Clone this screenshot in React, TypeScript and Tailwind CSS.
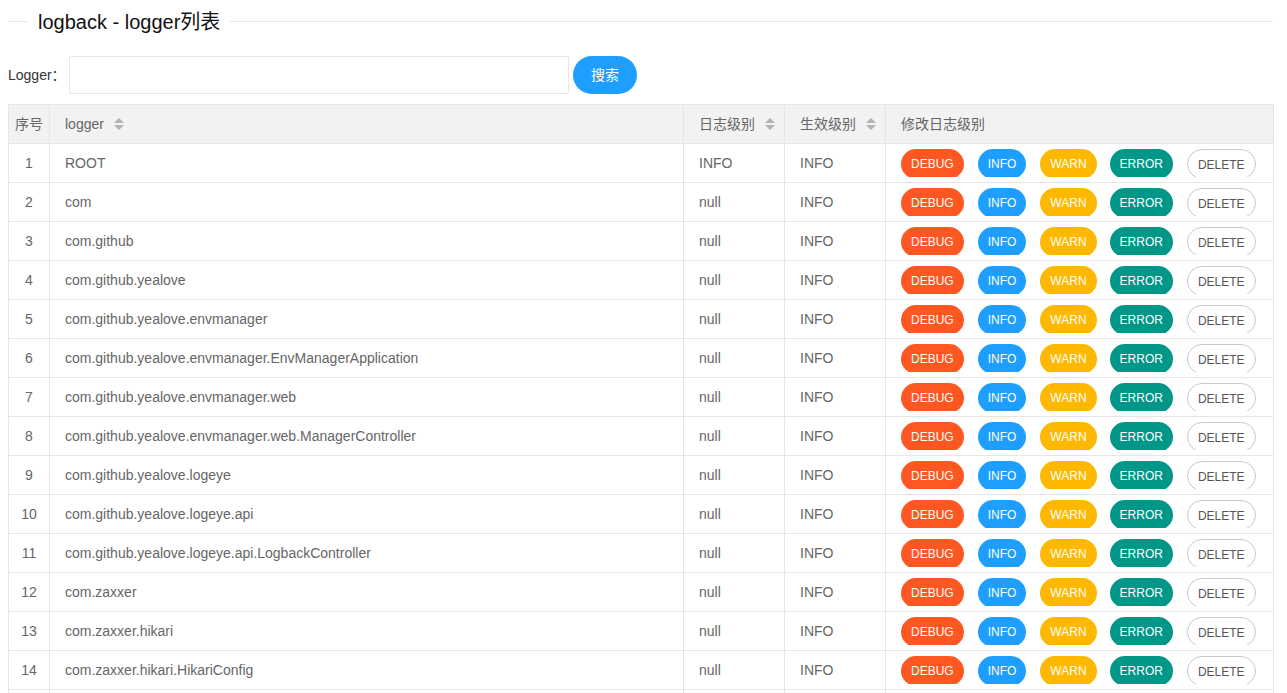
import React from 'react';

const LOGGERS: { name: string; level: string; effective: string }[] = [
  { name: 'ROOT', level: 'INFO', effective: 'INFO' },
  { name: 'com', level: 'null', effective: 'INFO' },
  { name: 'com.github', level: 'null', effective: 'INFO' },
  { name: 'com.github.yealove', level: 'null', effective: 'INFO' },
  { name: 'com.github.yealove.envmanager', level: 'null', effective: 'INFO' },
  { name: 'com.github.yealove.envmanager.EnvManagerApplication', level: 'null', effective: 'INFO' },
  { name: 'com.github.yealove.envmanager.web', level: 'null', effective: 'INFO' },
  { name: 'com.github.yealove.envmanager.web.ManagerController', level: 'null', effective: 'INFO' },
  { name: 'com.github.yealove.logeye', level: 'null', effective: 'INFO' },
  { name: 'com.github.yealove.logeye.api', level: 'null', effective: 'INFO' },
  { name: 'com.github.yealove.logeye.api.LogbackController', level: 'null', effective: 'INFO' },
  { name: 'com.zaxxer', level: 'null', effective: 'INFO' },
  { name: 'com.zaxxer.hikari', level: 'null', effective: 'INFO' },
  { name: 'com.zaxxer.hikari.HikariConfig', level: 'null', effective: 'INFO' },
  { name: 'com.zaxxer.hikari.HikariDataSource', level: 'null', effective: 'INFO' },
];

const LEVEL_BUTTONS = [
  { label: 'DEBUG', cls: 'bg-[#FF5722] text-white leading-[28px]' },
  { label: 'INFO', cls: 'bg-[#1E9FFF] text-white leading-[28px]' },
  { label: 'WARN', cls: 'bg-[#FFB800] text-white leading-[28px]' },
  { label: 'ERROR', cls: 'bg-[#009688] text-white leading-[28px] -ml-px' },
  { label: 'DELETE', cls: 'bg-white text-[#555] border border-[#C9C9C9] leading-[30px]' },
];

const SortIcon = () => (
  <svg width="10" height="12" viewBox="0 0 10 12" className="ml-[10px] inline-block">
    <path d="M5 0 L10 5 L0 5 Z" fill="#b2b2b2" />
    <path d="M0 7 L10 7 L5 12 Z" fill="#b2b2b2" />
  </svg>
);

const Cell = ({ children, center }: { children: React.ReactNode; center?: boolean }) => (
  <div
    className={`h-[28px] leading-[28px] overflow-hidden whitespace-nowrap ${
      center ? 'text-center' : 'px-[15px]'
    }`}
  >
    {children}
  </div>
);

export default function App() {
  return (
    <div className="h-[693px] overflow-hidden bg-white font-['Liberation_Sans','Noto_Sans_CJK_SC',sans-serif] text-[14px] text-[#333]">
      <div className="pl-2 w-[1273px]">
        {/* Title */}
        <div className="flex items-center pt-[8px] h-[35px]">
          <div className="w-[20px] h-px bg-[#e6e6e6]" />
          <span className="px-[10px] text-[20px] leading-[28px] text-[#111]">logback - logger列表</span>
          <div className="flex-1 h-px bg-[#e6e6e6]" />
        </div>

        {/* Search */}
        <div className="flex items-center mt-[21px] h-[38px]">
          <label className="w-[61px] whitespace-nowrap text-[#333]">Logger：</label>
          <input className="w-[500px] h-[38px] border border-[#e6e6e6] rounded-[2px] px-[10px] outline-none" />
          <button className="ml-[4px] h-[38px] px-[18px] rounded-full bg-[#1E9FFF] text-white text-[14px]">搜索</button>
        </div>

        {/* Table */}
        <table className="mt-[10px] w-[1265px] table-fixed border-collapse text-[#666]">
          <colgroup>
            <col className="w-[41px]" />
            <col className="w-[634px]" />
            <col className="w-[101px]" />
            <col className="w-[101px]" />
            <col className="w-[388px]" />
          </colgroup>
          <thead>
            <tr className="bg-[#f2f2f2]">
              <th className="border border-[#e6e6e6] py-[5px] font-normal text-left">
                <Cell center>序号</Cell>
              </th>
              <th className="border border-[#e6e6e6] py-[5px] font-normal text-left">
                <Cell>
                  <span className="inline-flex items-center">logger<SortIcon /></span>
                </Cell>
              </th>
              <th className="border border-[#e6e6e6] py-[5px] font-normal text-left">
                <Cell>
                  <span className="inline-flex items-center">日志级别<SortIcon /></span>
                </Cell>
              </th>
              <th className="border border-[#e6e6e6] py-[5px] font-normal text-left">
                <Cell>
                  <span className="inline-flex items-center">生效级别<SortIcon /></span>
                </Cell>
              </th>
              <th className="border border-[#e6e6e6] py-[5px] font-normal text-left">
                <Cell>修改日志级别</Cell>
              </th>
            </tr>
          </thead>
          <tbody>
            {LOGGERS.map((row, i) => (
              <tr key={i}>
                <td className="border border-[#e6e6e6] py-[5px]">
                  <Cell center>{i + 1}</Cell>
                </td>
                <td className="border border-[#e6e6e6] py-[5px]">
                  <Cell>{row.name}</Cell>
                </td>
                <td className="border border-[#e6e6e6] py-[5px]">
                  <Cell>{row.level}</Cell>
                </td>
                <td className="border border-[#e6e6e6] py-[5px]">
                  <Cell>{row.effective}</Cell>
                </td>
                <td className="border border-[#e6e6e6] py-[5px]">
                  <div className="h-[28px] px-[15px] overflow-hidden flex items-start gap-[14px]">
                    {LEVEL_BUTTONS.map((b) => (
                      <button
                        key={b.label}
                        className={`h-[30px] shrink-0 px-[10px] rounded-full text-[12px] ${b.cls}`}
                      >
                        {b.label}
                      </button>
                    ))}
                  </div>
                </td>
              </tr>
            ))}
          </tbody>
        </table>
      </div>
    </div>
  );
}
